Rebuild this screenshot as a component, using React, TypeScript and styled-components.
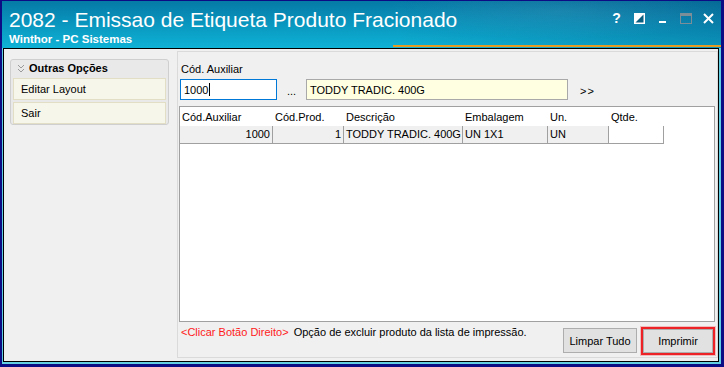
import styled, { createGlobalStyle } from 'styled-components';

const GlobalStyle = createGlobalStyle`
  html, body {
    margin: 0;
    padding: 0;
    background: #0c0c84;
  }
  * {
    box-sizing: border-box;
  }
`;

type Item = {
  auxiliar: string;
  prod: string;
  descricao: string;
  embalagem: string;
  un: string;
  qtde: string;
};

const items: Item[] = [
  { auxiliar: '1000', prod: '1', descricao: 'TODDY TRADIC. 400G', embalagem: 'UN 1X1', un: 'UN', qtde: '' },
];

const columns = ['Cód.Auxiliar', 'Cód.Prod.', 'Descrição', 'Embalagem', 'Un.', 'Qtde.'];

const App = () => {
  return (
    <>
      <GlobalStyle />
      <StyledWindow>
        <StyledTitleBar>
          <StyledTitleText>
            <h1>2082 - Emissao de Etiqueta Produto Fracionado</h1>
            <span>Winthor - PC Sistemas</span>
          </StyledTitleText>
          <StyledControls>
            <StyledControl>
              <StyledHelp>?</StyledHelp>
            </StyledControl>
            <StyledControl>
              <svg width="11" height="11" viewBox="0 0 11 11">
                <rect x="0.5" y="0.5" width="10" height="10" fill="#fff" stroke="#fff" />
                <polygon points="9.5,1.5 9.5,9.5 1.5,9.5" fill="#0a5f80" />
              </svg>
            </StyledControl>
            <StyledControl>
              <svg width="11" height="11" viewBox="0 0 11 11">
                <rect x="2" y="8" width="7" height="2" fill="#fff" />
              </svg>
            </StyledControl>
            <StyledControl>
              <svg width="12" height="11" viewBox="0 0 12 11">
                <rect x="0.5" y="0.5" width="11" height="10" fill="none" stroke="#7c8f98" />
                <rect x="1" y="1" width="10" height="2" fill="#7c8f98" />
              </svg>
            </StyledControl>
            <StyledControl>
              <svg width="11" height="11" viewBox="0 0 11 11">
                <path d="M1 1 L10 10 M10 1 L1 10" stroke="#fff" strokeWidth="2" />
              </svg>
            </StyledControl>
          </StyledControls>
        </StyledTitleBar>

        <StyledEdge>
          <StyledClient>
            <StyledSidebar>
              <StyledGroup>
                <StyledGroupHeader>
                  <svg width="8" height="9" viewBox="0 0 8 9">
                    <path d="M1 1 L4 4 L7 1 M1 5 L4 8 L7 5" fill="none" stroke="#9a9a9a" strokeWidth="1" />
                  </svg>
                  Outras Opções
                </StyledGroupHeader>
                <StyledGroupItem>Editar Layout</StyledGroupItem>
                <StyledGroupItem>Sair</StyledGroupItem>
              </StyledGroup>
            </StyledSidebar>

            <StyledPanel>
              <StyledLabel>Cód. Auxiliar</StyledLabel>
              <StyledFieldRow>
                <StyledField $width={97} $focused>
                  1000<StyledCaret />
                </StyledField>
                <StyledDots>...</StyledDots>
                <StyledField $width={262} $readonly>
                  TODDY TRADIC. 400G
                </StyledField>
                <StyledNext>&gt;&gt;</StyledNext>
              </StyledFieldRow>

              <StyledGrid>
                <StyledGridRow>
                  {columns.map((c) => (
                    <StyledHeadCell key={c}>{c}</StyledHeadCell>
                  ))}
                </StyledGridRow>
                {items.map((it) => (
                  <StyledGridRow key={it.auxiliar}>
                    <StyledCell $right>{it.auxiliar}</StyledCell>
                    <StyledCell $right>{it.prod}</StyledCell>
                    <StyledCell>{it.descricao}</StyledCell>
                    <StyledCell>{it.embalagem}</StyledCell>
                    <StyledCell>{it.un}</StyledCell>
                    <StyledCell $edit>{it.qtde}</StyledCell>
                  </StyledGridRow>
                ))}
              </StyledGrid>

              <StyledFooter>
                <StyledHint>
                  <em>&lt;Clicar Botão Direito&gt;</em> Opção de excluir produto da lista de impressão.
                </StyledHint>
                <StyledButton>Limpar Tudo</StyledButton>
                <StyledHighlight>
                  <StyledButton $wide>Imprimir</StyledButton>
                </StyledHighlight>
              </StyledFooter>
            </StyledPanel>
          </StyledClient>
        </StyledEdge>
      </StyledWindow>
    </>
  );
};

const StyledWindow = styled.div`
  width: 724px;
  height: 367px;
  display: flex;
  flex-direction: column;
  background: #0c0c84;
  border-style: solid;
  border-color: #0c0c84;
  border-width: 1px 3px 3px 2px;
  font-family: "Liberation Sans", Arial, sans-serif;
  font-size: 11px;
  color: #000;
`;

const StyledTitleBar = styled.div`
  position: relative;
  height: 47px;
  display: flex;
  justify-content: space-between;
  align-items: flex-start;
  padding: 6px 1px 0 7px;
  color: #fff;
  background:
    radial-gradient(ellipse 260px 40px at 560px 10px, rgba(255, 255, 255, 0.08), transparent 70%),
    linear-gradient(to right, rgba(0, 0, 0, 0) 0%, rgba(0, 0, 0, 0) 55%, rgba(0, 40, 90, 0.22) 100%),
    linear-gradient(to bottom, #057aa6 0%, #0994bd 45%, #0fb2d5 100%);

  &::after {
    content: '';
    position: absolute;
    left: 391px;
    right: 0;
    bottom: 1px;
    height: 2px;
    background: #e59a22;
  }
`;

const StyledTitleText = styled.div`
  display: flex;
  flex-direction: column;
  h1 {
    margin: 0;
    font-size: 21px;
    line-height: 26px;
    font-weight: normal;
    white-space: nowrap;
  }
  span {
    font-size: 11.5px;
    line-height: 13px;
    font-weight: bold;
  }
`;

const StyledControls = styled.div`
  display: flex;
  padding-top: 4px;
`;

const StyledControl = styled.div`
  width: 23px;
  height: 14px;
  display: flex;
  align-items: center;
  justify-content: center;
`;

const StyledHelp = styled.span`
  font-size: 14px;
  font-weight: bold;
  line-height: 14px;
  color: #fff;
`;

const StyledEdge = styled.div`
  flex: 1;
  display: flex;
  border-style: solid;
  border-color: #62cfe2;
  border-width: 0 2px 2px 1px;
`;

const StyledClient = styled.div`
  flex: 1;
  display: flex;
  background: #f0f0f0;
  border: 1px solid #000;
`;

const StyledSidebar = styled.div`
  width: 173px;
  flex-shrink: 0;
  padding: 10px 0 0 6px;
`;

const StyledGroup = styled.div`
  width: 159px;
  height: 66px;
  padding: 0 2px 0 2px;
  background: #e9e9e9;
  border: 1px solid #cfcfcf;
  border-radius: 3px;
`;

const StyledGroupHeader = styled.div`
  height: 18px;
  display: flex;
  align-items: flex-start;
  gap: 4px;
  padding: 1px 0 0 4px;
  line-height: 14px;
  font-weight: bold;
  font-size: 11px;
  svg {
    margin-top: 3px;
  }
`;

const StyledGroupItem = styled.div`
  height: 22px;
  margin-bottom: 2px;
  display: flex;
  align-items: center;
  padding-left: 7px;
  background: #f7f6ea;
  border: 1px solid #e2dec6;
`;

const StyledPanel = styled.div`
  flex: 1;
  margin: 2px 0 3px 0;
  display: flex;
  flex-direction: column;
  padding: 0 2px 0 1px;
  border: 1px solid #dadada;
`;

const StyledLabel = styled.div`
  margin: 10px 0 0 2px;
  line-height: 14px;
`;

const StyledFieldRow = styled.div`
  display: flex;
  align-items: center;
  margin: 3px 0 0 1px;
  height: 21px;
`;

const StyledField = styled.div<{ $width: number; $focused?: boolean; $readonly?: boolean }>`
  width: ${(p) => p.$width}px;
  height: 21px;
  display: flex;
  align-items: center;
  padding-left: 3px;
  border: 1px solid ${(p) => (p.$focused ? '#0078d7' : '#a9a9a9')};
  background: ${(p) => (p.$readonly ? '#ffffe1' : '#fff')};
`;

const StyledCaret = styled.span`
  display: inline-block;
  width: 1px;
  height: 13px;
  margin-left: 1px;
  background: #000;
`;

const StyledDots = styled.span`
  width: 29px;
  text-align: center;
  padding-top: 3px;
`;

const StyledNext = styled.span`
  margin-left: 12px;
  padding-top: 2px;
  letter-spacing: 1px;
`;

const StyledGrid = styled.div`
  margin-top: 6px;
  height: 216px;
  background: #fff;
  border: 1px solid #a0a0a0;
`;

const StyledGridRow = styled.div`
  display: grid;
  grid-template-columns: 93px 71px 119px 85px 61px 55px;
`;

const StyledHeadCell = styled.div`
  height: 19px;
  line-height: 20px;
  padding-left: 2px;
  white-space: nowrap;
`;

const StyledCell = styled.div<{ $right?: boolean; $edit?: boolean }>`
  height: 18px;
  line-height: 17px;
  padding: 0 2px 0 2px;
  text-align: ${(p) => (p.$right ? 'right' : 'left')};
  white-space: nowrap;
  overflow: hidden;
  background: ${(p) => (p.$edit ? '#fff' : '#f0f0f0')};
  border-right: 1px solid #a0a0a0;
  border-bottom: 1px solid #a0a0a0;
`;

const StyledFooter = styled.div`
  flex: 1;
  display: flex;
  align-items: flex-start;
  gap: 4px;
`;

const StyledHint = styled.div`
  flex: 1;
  padding: 3px 0 0 2px;
  line-height: 14px;
  white-space: nowrap;
  em {
    font-style: normal;
    color: #ff1a1a;
    margin-right: 2px;
  }
`;

const StyledButton = styled.button<{ $wide?: boolean }>`
  width: ${(p) => (p.$wide ? 70 : 74)}px;
  height: ${(p) => (p.$wide ? 24 : 25)}px;
  margin-top: ${(p) => (p.$wide ? 0 : 6)}px;
  padding: 0;
  font-family: inherit;
  font-size: 11px;
  color: #000;
  background: #e1e1e1;
  border: 1px solid #adadad;
`;

const StyledHighlight = styled.div`
  margin-top: 5px;
  padding: 0;
  border: 2px solid #ec2227;
  box-shadow: 0 0 0 1px rgba(236, 34, 39, 0.25);
  display: flex;
`;

export default App;
